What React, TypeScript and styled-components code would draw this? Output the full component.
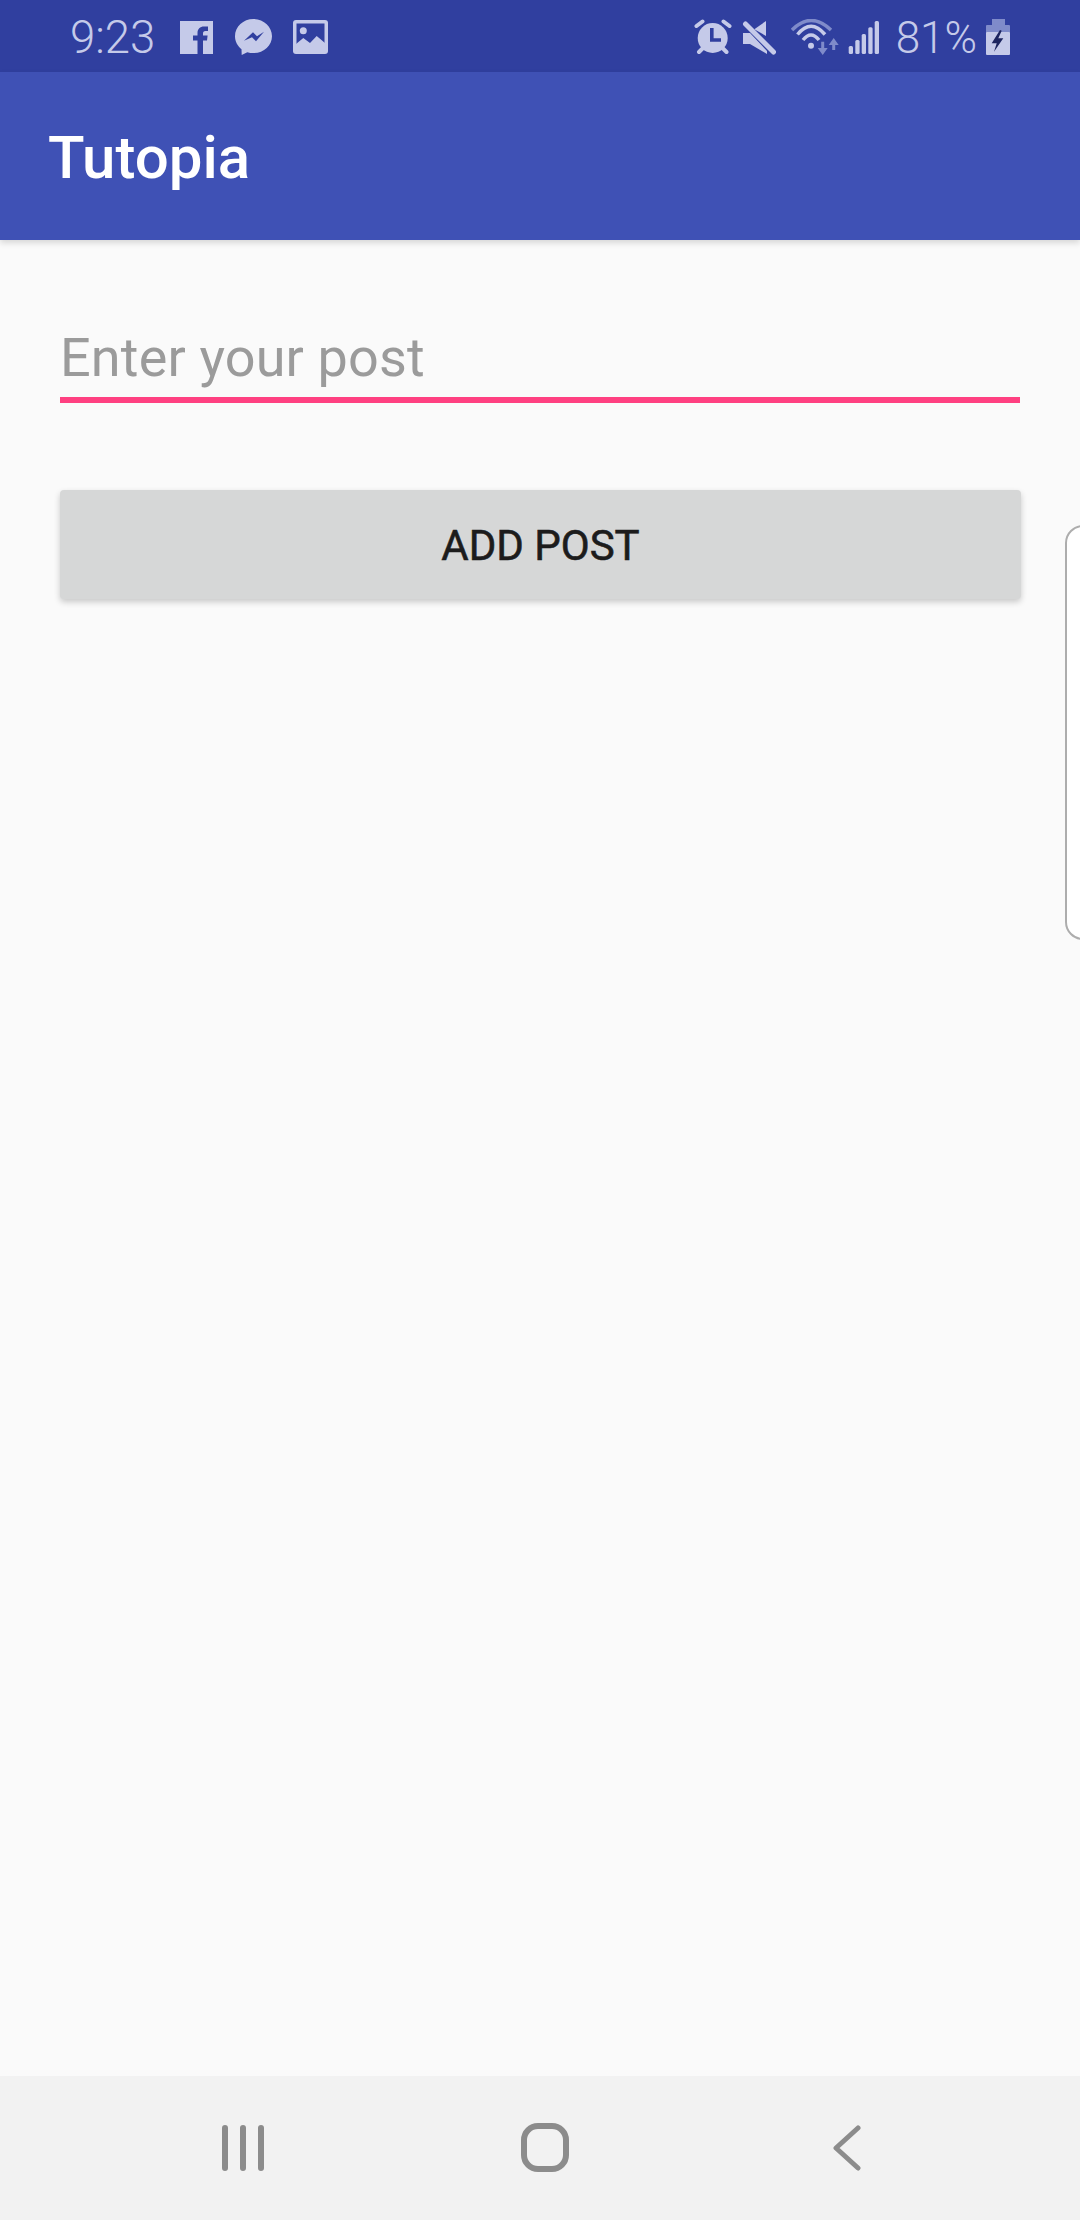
import React from "react";
import styled, { createGlobalStyle } from "styled-components";

const Global = createGlobalStyle`
  html, body { margin: 0; padding: 0; background: #fafafa; }
  * { box-sizing: border-box; }
  #root { width: 1080px; height: 2220px; overflow: hidden; }
`;

const Screen = styled.div`
  position: relative;
  width: 1080px;
  height: 2220px;
  display: flex;
  flex-direction: column;
  background: #fafafa;
  font-family: Roboto, "Liberation Sans", sans-serif;
  overflow: hidden;
`;

const StatusBar = styled.div`
  height: 72px;
  flex: none;
  background: #303f9f;
  color: #c5cae9;
  display: flex;
  align-items: center;
  justify-content: space-between;
  padding: 2px 70px 0 70px;
`;

const StatusGroup = styled.div`
  display: flex;
  align-items: center;
`;

const Clock = styled.span`
  font-size: 45.5px;
  font-weight: 300;
  line-height: 72px;
  width: 110px;
  padding-top: 1px;
`;

const Battery = styled.span`
  font-size: 44px;
  font-weight: 300;
  line-height: 72px;
  margin: 0 9px 0 17px;
  padding-top: 1px;
`;

const AppBar = styled.header`
  height: 168px;
  flex: none;
  background: #3f51b5;
  display: flex;
  align-items: center;
  padding: 3px 48px 0;
  box-shadow: 0 3px 6px rgba(0, 0, 0, 0.14);
  position: relative;
`;

const Title = styled.h1`
  margin: 0;
  color: #ffffff;
  font-size: 60px;
  font-weight: 500;
  line-height: 1;
`;

const Content = styled.main`
  flex: 1;
  display: flex;
  flex-direction: column;
  padding: 54px 60px 0 60px;
`;

const Field = styled.div`
  height: 109px;
  display: flex;
  align-items: flex-end;
  border-bottom: 6px solid #ff4081;
`;

const Placeholder = styled.span`
  color: #9b9b9b;
  font-size: 54px;
  letter-spacing: 0.15px;
  line-height: 72px;
  padding-bottom: 3px;
`;

const AddButton = styled.button`
  margin-top: 87px;
  height: 109px;
  width: 961px;
  padding: 1px 0 0;
  border: none;
  border-radius: 4px;
  background: #d6d7d7;
  color: #1c1c1c;
  font-family: inherit;
  font-size: 42px;
  font-weight: 400;
  letter-spacing: 0;
  -webkit-text-stroke: 0.6px #1c1c1c;
  box-shadow: 0 3px 6px rgba(0, 0, 0, 0.2);
`;

const EdgePanel = styled.div`
  position: absolute;
  left: 1065px;
  top: 525px;
  width: 40px;
  height: 415px;
  background: #ffffff;
  border: 2px solid #adadad;
  border-radius: 18px;
`;

const NavBar = styled.nav`
  height: 144px;
  flex: none;
  background: #f2f2f2;
  display: flex;
  align-items: center;
  padding: 0 0 1px 222px;
`;

const NavIcon = styled.svg<{ $left?: number }>`
  display: block;
  flex: none;
  margin-left: ${(p) => p.$left ?? 0}px;
`;

const StatusIcon = styled.svg<{ $gap?: number }>`
  display: block;
  flex: none;
  margin-right: ${(p) => p.$gap ?? 0}px;
`;

const tint = "#c5cae9";
const bar = "#303f9f";
const dim = "#7f8bca";

export default function App() {
  return (
    <Screen>
      <Global />
      <StatusBar>
        <StatusGroup>
          <Clock>9:23</Clock>
          <StatusIcon $gap={22} width="33" height="33" viewBox="0 0 33 33">
            <rect width="33" height="33" fill={tint} />
            <path fill={bar} d="M28 5.500h-4c-4 0-6.500 2.500-6.500 6.500v2.500H13v5h4.500V33H23V19.500h4l.6-5H23v-2c0-1.500.6-2.500 2.500-2.500H28z" />
          </StatusIcon>
          <StatusIcon $gap={21} width="37" height="36" viewBox="0 0 37 36">
            <path fill={tint} d="M18.500 0C8.300 0 0 7.700 0 17.200c0 5.200 2.500 9.800 6.500 13l.2 5.800 5.600-2.800c2 .6 4 .9 6.200.9 10.200 0 18.500-7.700 18.500-16.900S28.700 0 18.500 0z" />
            <path fill={bar} d="M9 21.700 18 13.300l4 4 7-4.600-8 9.600-4-4z" />
          </StatusIcon>
          <StatusIcon width="35" height="34" viewBox="0 0 35 34">
            <rect width="35" height="34" rx="3" fill={tint} />
            <rect x="3.500" y="3.500" width="28" height="24" fill={bar} />
            <circle cx="10.300" cy="10.700" r="3.500" fill={tint} />
            <path fill={tint} d="M3 24l7.300-6 6.700 5 6.700-7 8.300 7v10H3z" />
          </StatusIcon>
        </StatusGroup>
        <StatusGroup>
          <StatusIcon $gap={9} width="39" height="36" viewBox="0 0 39 36">
            <circle cx="18.700" cy="19" r="15" fill={tint} />
            <path stroke={bar} strokeWidth="3.600" fill="none" d="M17.800 9v12h9.200" />
            <path stroke={tint} strokeWidth="4" strokeLinecap="round" d="M2.500 7l6-4.500M35.500 7l-6-4.500M5 33l3.500-3.500M32.500 33L29 29.500" />
          </StatusIcon>
          <StatusIcon $gap={15} width="34" height="36" viewBox="0 0 34 36">
            <path fill={tint} d="M24 2v15L12.300 10.300z" />
            <path fill={tint} d="M1 14h7l17 18v3L8 25H1z" />
            <path stroke={tint} strokeWidth="5" strokeLinecap="round" d="M3.500 5 31.500 33" />
          </StatusIcon>
          <StatusIcon $gap={9} width="48" height="36" viewBox="0 0 48 36">
            <path fill="none" stroke={dim} strokeWidth="3.500" d="M1 11Q20-8 40 11" />
            <path fill="none" stroke={tint} strokeWidth="3.500" d="M6.500 15.500Q20-1 34 15.500" />
            <path fill="none" stroke={tint} strokeWidth="3.500" d="M12 21Q20 11 28 21" />
            <circle cx="20" cy="26.700" r="3" fill={tint} />
            <path stroke={dim} strokeWidth="3" d="M31.700 22.700V32M42.700 24V31" />
            <path fill={dim} d="M26.700 29h10l-5 7zM37.700 26h10l-5-7z" />
          </StatusIcon>
          <StatusIcon width="31" height="33" viewBox="0 0 31 33">
            <rect x="0.700" y="25" width="4.300" height="8" rx="1.500" fill={tint} />
            <rect x="7.300" y="19" width="4.300" height="14" rx="1.500" fill={tint} />
            <rect x="13.700" y="13" width="4.300" height="20" rx="1.500" fill={tint} />
            <rect x="20.300" y="6.300" width="4.300" height="26.700" rx="1.500" fill={tint} />
            <rect x="26.700" y="0" width="4.300" height="33" rx="1.500" fill={tint} />
          </StatusIcon>
          <Battery>81%</Battery>
          <StatusIcon width="24" height="36" viewBox="0 0 24 36">
            <rect x="6" y="0" width="13" height="7" fill={dim} />
            <rect x="0" y="6" width="24" height="8" rx="1" fill={dim} />
            <rect x="0" y="13" width="24" height="23" rx="1" fill={tint} />
            <path fill="#1d2560" d="M14 11 5.700 24.300h5L8 32.700l9.300-13.400h-5l3.400-7.600z" />
          </StatusIcon>
        </StatusGroup>
      </StatusBar>
      <AppBar>
        <Title>Tutopia</Title>
      </AppBar>
      <Content>
        <Field>
          <Placeholder>Enter your post</Placeholder>
        </Field>
        <AddButton>ADD POST</AddButton>
      </Content>
      <EdgePanel />
      <NavBar>
        <NavIcon width="46" height="46" viewBox="0 0 46 46">
          <path stroke="#8c8c8c" strokeWidth="6" strokeLinecap="round" d="M3 3v40M21 3v40M39 3v40" />
        </NavIcon>
        <NavIcon $left={253} width="48" height="49" viewBox="0 0 48 49">
          <rect x="3" y="3" width="42" height="43" rx="14" fill="none" stroke="#8c8c8c" strokeWidth="6" />
        </NavIcon>
        <NavIcon $left={264} width="28" height="46" viewBox="0 0 28 46">
          <path d="M25 3 3 23l22 20" fill="none" stroke="#8c8c8c" strokeWidth="5" strokeLinecap="round" strokeLinejoin="round" />
        </NavIcon>
      </NavBar>
    </Screen>
  );
}
